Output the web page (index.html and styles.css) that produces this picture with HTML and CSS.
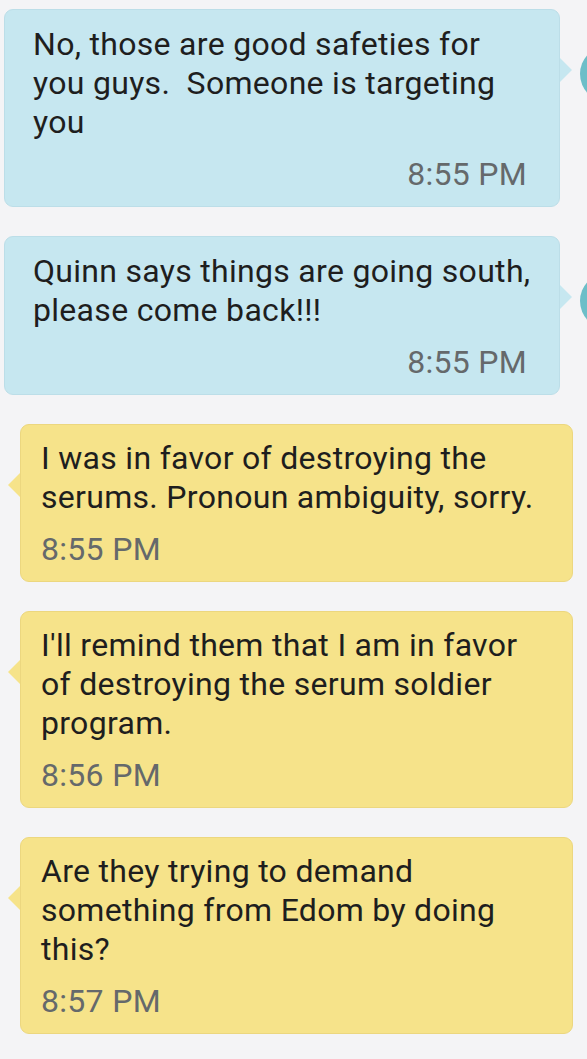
FILE: index.html
```html
<!DOCTYPE html>
<html lang="en">
<head>
    <meta charset="UTF-8">
    <meta name="viewport" content="width=device-width, initial-scale=1.0">
    <title>Chat</title>
    <link rel="stylesheet" href="styles.css">
</head>
<body>
    <div id="thread">
        <div class="row out">
            <div class="bubble">
                <div class="text">No, those are good safeties for you guys.&nbsp; Someone is targeting you</div>
                <div class="time">8:55 PM</div>
            </div>
            <div class="avatar"></div>
        </div>

        <div class="row out">
            <div class="bubble">
                <div class="text">Quinn says things are going south, please come back!!!</div>
                <div class="time">8:55 PM</div>
            </div>
            <div class="avatar"></div>
        </div>

        <div class="row in">
            <div class="bubble">
                <div class="text">I was in favor of destroying the serums. Pronoun ambiguity, sorry.</div>
                <div class="time">8:55 PM</div>
            </div>
        </div>

        <div class="row in">
            <div class="bubble">
                <div class="text">I'll remind them that I am in favor of destroying the serum soldier program.</div>
                <div class="time">8:56 PM</div>
            </div>
        </div>

        <div class="row in">
            <div class="bubble">
                <div class="text">Are they trying to demand something from Edom by doing this?</div>
                <div class="time">8:57 PM</div>
            </div>
        </div>
    </div>
</body>
</html>
```

FILE: styles.css
```css
body {
    font-family: Roboto, "Liberation Sans", sans-serif;
    background-color: #f4f4f6;
    margin: 0;
    padding: 0;
    overflow: hidden;
}

#thread {
    padding-top: 9px;
    display: flex;
    flex-direction: column;
    gap: 29px;
}

.row {
    display: flex;
    align-items: flex-start;
}

.row.out {
    padding-left: 4px;
}

.row.in {
    padding-left: 20px;
}

.bubble {
    position: relative;
    box-sizing: border-box;
    border-radius: 9px;
    padding: 14px 20px 16px 20px;
    color: #1e1e1e;
}

.text {
    font-size: 32px;
    line-height: 39px;
    letter-spacing: 0.3px;
}

.time {
    font-size: 32px;
    line-height: 32px;
    margin-top: 16px;
    color: #65696b;
    letter-spacing: 0.3px;
}

.out .bubble {
    flex: 0 0 556px;
    background-color: #c6e7f0;
    border: 1px solid #bcdee8;
    padding-top: 15px;
    padding-bottom: 16px;
    padding-left: 28px;
    padding-right: 24px;
}

.out .time {
    text-align: right;
    margin-right: 8px;
}

.in .bubble {
    flex: 0 0 553px;
    background-color: #f6e38a;
    border: 1px solid #ecd77f;
}

/* little tails */
.bubble::after {
    content: "";
    position: absolute;
    top: 48px;
    width: 0;
    height: 0;
    border-top: 12px solid transparent;
    border-bottom: 12px solid transparent;
}

.out .bubble::after {
    right: -13px;
    border-left: 12px solid #c6e7f0;
}

.in .bubble::after {
    left: -13px;
    border-right: 12px solid #f6e38a;
}

.avatar {
    flex: 0 0 56px;
    height: 56px;
    margin-left: 20px;
    margin-top: 37px;
    border-radius: 50%;
    background-color: #6dbec8;
}
```
